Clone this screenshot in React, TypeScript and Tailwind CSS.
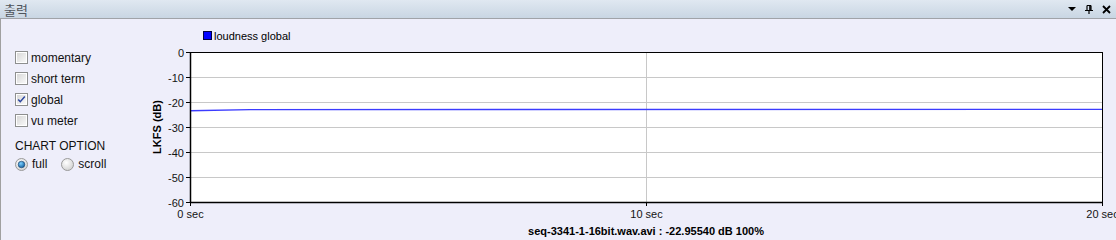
import React from "react";

const FONT = '"Liberation Sans", Arial, sans-serif';

function CheckBox({ checked }: { checked?: boolean }) {
  return (
    <svg width="13" height="13" viewBox="0 0 13 13" className="shrink-0">
      <defs>
        <linearGradient id="cbg" x1="0" y1="0" x2="1" y2="1">
          <stop offset="0" stopColor="#d8d8d8" />
          <stop offset="1" stopColor="#f8f8f8" />
        </linearGradient>
      </defs>
      <rect x="0.5" y="0.5" width="12" height="12" fill="#ffffff" stroke="#8e8f8f" />
      <rect x="2" y="2" width="9" height="9" fill="url(#cbg)" />
      {checked && (
        <path d="M3.2 6.4 L5.3 8.7 L9.8 3.6" fill="none" stroke="#2b45a0" strokeWidth="1.5" />
      )}
    </svg>
  );
}

function Radio({ checked }: { checked?: boolean }) {
  return (
    <svg width="13" height="13" viewBox="0 0 13 13" className="shrink-0">
      <defs>
        <radialGradient id="rdg" cx="0.4" cy="0.35" r="0.7">
          <stop offset="0" stopColor="#ffffff" />
          <stop offset="1" stopColor="#d0d0d0" />
        </radialGradient>
        <radialGradient id="rdot" cx="0.4" cy="0.35" r="0.7">
          <stop offset="0" stopColor="#7ed0ff" />
          <stop offset="1" stopColor="#0a5a9a" />
        </radialGradient>
      </defs>
      <circle cx="6.5" cy="6.5" r="6" fill="url(#rdg)" stroke="#9a9a9a" />
      {checked && <circle cx="6.5" cy="6.5" r="3.3" fill="url(#rdot)" stroke="#1b3f6a" strokeWidth="0.6" />}
    </svg>
  );
}

function Row({ label, checked }: { label: string; checked?: boolean }) {
  return (
    <div className="flex h-[21px] items-center gap-[3px]">
      <CheckBox checked={checked} />
      <span className="text-[12px] leading-none text-[#111]">{label}</span>
    </div>
  );
}

function Chart() {
  const ox = 50;
  const oy = 33;
  const w = 912;
  const h = 150;
  const yTicks = [0, -10, -20, -30, -40, -50, -60];
  return (
    <svg width="976" height="221" viewBox="0 0 976 221" style={{ fontFamily: FONT }} className="block">
      {/* legend */}
      <rect x="63.5" y="12.5" width="8" height="8" fill="#0000ff" stroke="#000040" />
      <text x="74" y="21" fontSize="11" fill="#000">loudness global</text>

      {/* plot area */}
      <rect x={ox} y={oy} width={w} height={h} fill="#ffffff" />
      {yTicks.slice(1, 6).map((v) => {
        const y = oy + (-v / 60) * h + 0.5;
        return <line key={v} x1={ox} x2={ox + w} y1={y} y2={y} stroke="#c8c8c8" />;
      })}
      <line x1={ox + w / 2 + 0.5} x2={ox + w / 2 + 0.5} y1={oy} y2={oy + h} stroke="#c8c8c8" />

      {/* data */}
      <path
        d={`M${ox} ${oy + 58.8} L${ox + 60} ${oy + 57.6} L${ox + w} ${oy + 57.4}`}
        fill="none"
        stroke="#3c3cff"
        strokeWidth="1.4"
      />

      {/* border */}
      <rect x={ox + 0.5} y={oy + 0.5} width={w} height={h} fill="none" stroke="#000" />
      <line x1={ox + 0.5} x2={ox + 0.5} y1={oy} y2={oy + h + 1} stroke="#000" strokeWidth="1.5" />
      <line x1={ox} x2={ox + w + 1} y1={oy + h + 0.5} y2={oy + h + 0.5} stroke="#000" strokeWidth="1.5" />

      {/* y ticks */}
      {yTicks.map((v) => {
        const y = oy + (-v / 60) * h + 0.5;
        return (
          <g key={v}>
            <line x1={ox - 4} x2={ox} y1={y} y2={y} stroke="#000" />
            <text x={ox - 6} y={y + 4} fontSize="11" textAnchor="end" fill="#141414">
              {v}
            </text>
          </g>
        );
      })}

      {/* x ticks */}
      {[0, 10, 20].map((s, i) => {
        const x = ox + (i * w) / 2 + 0.5;
        return (
          <g key={s}>
            <line x1={x} x2={x} y1={oy + h} y2={oy + h + 4} stroke="#000" />
            <text x={x} y={oy + h + 16} fontSize="11" textAnchor="middle" fill="#141414">
              {s} sec
            </text>
          </g>
        );
      })}

      {/* axis title */}
      <text
        x={0}
        y={0}
        fontSize="11"
        fontWeight="bold"
        textAnchor="middle"
        fill="#000"
        transform={`translate(21 ${oy + h / 2}) rotate(-90)`}
      >
        LKFS (dB)
      </text>

      {/* status */}
      <text x={ox + w / 2} y={216} fontSize="11" fontWeight="bold" textAnchor="middle" fill="#000">
        seq-3341-1-16bit.wav.avi : -22.95540 dB 100%
      </text>
    </svg>
  );
}

export default function App() {
  return (
    <div className="flex h-[240px] w-[1116px] flex-col overflow-hidden bg-[#eeeefa]" style={{ fontFamily: FONT }}>
      <div className="flex h-[19px] shrink-0 items-center justify-between border-b border-[#a0a3a8] bg-gradient-to-b from-[#e0e8f1] to-[#c9d6e3] pl-[4px] pr-[5px]">
        <span
          className="text-[13px] leading-none text-[#50555c]"
          style={{ fontFamily: '"Noto Sans CJK KR", "Liberation Sans", sans-serif' }}
        >
          출력
        </span>
        <div className="flex items-center gap-[9px]">
          <svg width="8" height="8" viewBox="0 0 8 8">
            <path d="M0 2 H8 L4 6 Z" fill="#000" />
          </svg>
          <svg width="8" height="9" viewBox="0 0 8 9">
            <path d="M2 0.5 V5 M6 0.5 V5 M2 0.5 H6 M0 5.5 H8 M4 5.5 V9" stroke="#000" fill="none" strokeWidth="1.2" />
            <rect x="4.2" y="0.5" width="1.6" height="5" fill="#000" />
          </svg>
          <svg width="9" height="9" viewBox="0 0 9 9">
            <path d="M1 1 L8 8 M8 1 L1 8" stroke="#000" strokeWidth="1.8" />
          </svg>
        </div>
      </div>
      <div className="flex flex-1 border-l border-[#a0a0a0]">
        <div className="flex w-[139px] shrink-0 flex-col pl-[14px] pt-[28px]">
          <Row label="momentary" />
          <Row label="short term" />
          <Row label="global" checked />
          <Row label="vu meter" />
          <div className="mt-[8px] h-[15px] text-[12px] leading-[15px] text-[#111]">CHART OPTION</div>
          <div className="flex h-[20px] items-center">
            <Radio checked />
            <span className="ml-[4px] text-[12px] leading-none text-[#111]">full</span>
            <span className="ml-[14px]">
              <Radio />
            </span>
            <span className="ml-[4px] text-[12px] leading-none text-[#111]">scroll</span>
          </div>
        </div>
        <Chart />
      </div>
    </div>
  );
}
